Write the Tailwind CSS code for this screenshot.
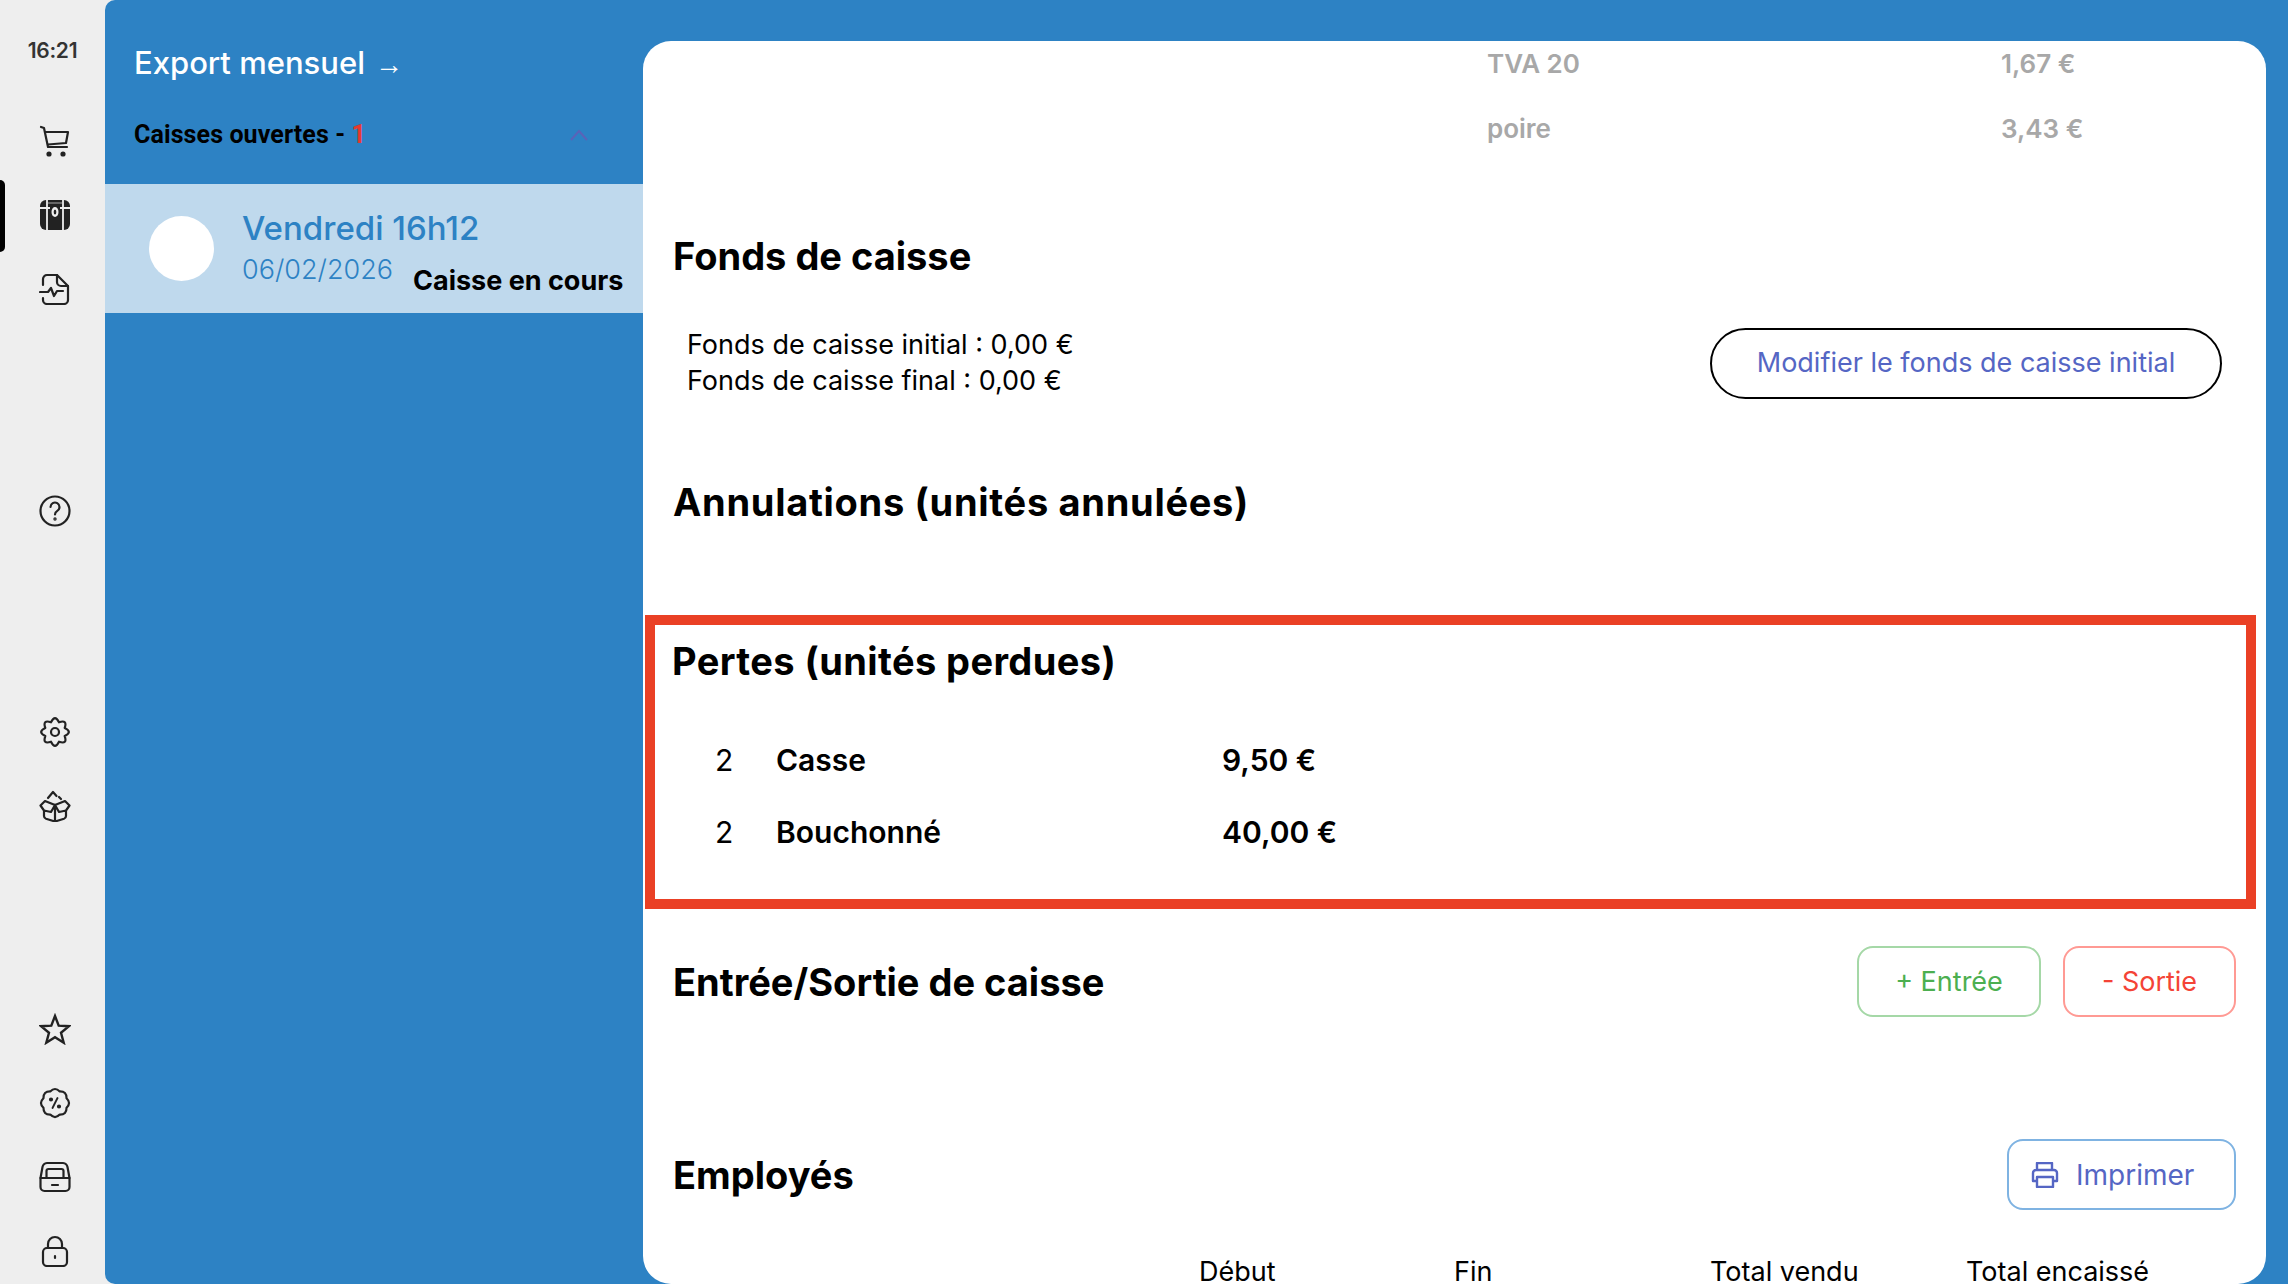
<!DOCTYPE html>
<html lang="fr">
<head>
    <meta charset="UTF-8">
    <title>Caisses</title>
    <script src="https://cdn.jsdelivr.net/npm/@tailwindcss/browser@4"></script>
</head>
<body class="font-['Inter',sans-serif] bg-[#eeeeee] text-black">
<div class="flex h-[1284px] w-[2288px] overflow-hidden">

    <!-- icon rail -->
    <aside class="w-[105px] shrink-0 bg-[#eeeeee] text-[#222222]">
        <div class="h-[100px] pt-[2px] flex items-center justify-center text-[21px] font-semibold text-[#333333] tracking-[-0.3px]">16:21</div>
        <div class="mt-[4px] h-[74px] flex items-center justify-center pl-[5px]">
            <svg width="32" height="32" viewBox="0 0 32 32" fill="none" stroke="currentColor" stroke-width="2.2" stroke-linecap="round" stroke-linejoin="round"><path d="M2 2l3 1 4 19h19"/><path d="M6 7h23l-2 11-18 1.500"/><circle cx="10" cy="29" r="1.500" fill="currentColor"/><circle cx="24" cy="29" r="1.500" fill="currentColor"/></svg>
        </div>
        <div class="relative h-[74px] flex items-center justify-center pl-[5px]">
            <div class="absolute left-0 top-[2px] w-[5px] h-[72px] bg-black rounded-r-[5px]"></div>
            <svg width="32" height="32" viewBox="0 0 32 32"><rect x="1" y="1" width="30" height="30" rx="6" fill="#222222"/><path d="M8 1v30M24 1v30M1 9h10M21 9h10" stroke="#eeeeee" stroke-width="1.800" fill="none"/><path d="M9 3h14v2H9z" fill="#666666"/><ellipse cx="16" cy="13" rx="3.500" ry="5" fill="#eeeeee"/><ellipse cx="16" cy="13" rx="1.300" ry="2.500" fill="#222222"/></svg>
        </div>
        <div class="h-[74px] flex items-center justify-center pl-[5px]">
            <svg width="32" height="32" viewBox="0 0 32 32" fill="none" stroke="currentColor" stroke-width="2.200" stroke-linecap="round" stroke-linejoin="round"><path d="M4 12V6a4 4 0 0 1 4-4h10l11 11v14a4 4 0 0 1-4 4H8a4 4 0 0 1-4-4v-2"/><path d="M18 2v7a4 4 0 0 0 4 4h7"/><path d="M1 19h8l3-4 3 8 3-5h6"/></svg>
        </div>
        <div class="mt-[148px] h-[74px] flex items-center justify-center pl-[5px]">
            <svg width="32" height="32" viewBox="0 0 32 32" fill="none" stroke="currentColor" stroke-width="2.200" stroke-linecap="round" stroke-linejoin="round"><circle cx="16" cy="16" r="14.500"/><path d="M11.500 12a4.500 4.500 0 1 1 6.800 3.900c-1.500.9-2.300 1.800-2.300 3.600"/><circle cx="16" cy="24" r=".6" fill="currentColor"/></svg>
        </div>
        <div class="mt-[147px] h-[74px] flex items-center justify-center pl-[5px]">
            <svg width="32" height="32" viewBox="0 0 32 32" fill="none" stroke="currentColor" stroke-width="2.200" stroke-linejoin="round"><path d="M25.700 11.980Q34 16 25.700 20.020Q28.700 28.700 20.020 25.700Q16 34 11.980 25.700Q3.300 28.700 6.300 20.020Q-2 16 6.300 11.980Q3.300 3.300 11.980 6.300Q16 -2 20.020 6.300Q28.700 3.300 25.700 11.980Z"/><circle cx="16" cy="16" r="4"/></svg>
        </div>
        <div class="h-[74px] flex items-center justify-center pl-[5px]">
            <svg width="32" height="32" viewBox="0 0 32 32" fill="none" stroke="currentColor" stroke-width="2.200" stroke-linecap="round" stroke-linejoin="round"><path d="M16 15L6 11 1.500 15.500 5 20.500V26a3 3 0 0 0 2 2.800l9 2.700 9-2.700a3 3 0 0 0 2-2.800v-5.500l3.500-5L26 11zM16 15v16.500M5 20.500l7 1.500 4-7 4 7 7-1.500"/><path d="M9 8l5-6 3.500 4M22 9l-2-2"/></svg>
        </div>
        <div class="mt-[149px] h-[74px] flex items-center justify-center pl-[5px]">
            <svg width="32" height="32" viewBox="0 0 32 32" fill="none" stroke="currentColor" stroke-width="2.400" stroke-linejoin="miter"><path d="M16 3l3.700 9.600 10.300.6-8 6.500 2.700 10L16 24.200l-8.700 5.500 2.700-10-8-6.500 10.300-.6z"/></svg>
        </div>
        <div class="h-[74px] flex items-center justify-center pl-[5px]">
            <svg width="32" height="32" viewBox="0 0 32 32" fill="none" stroke="currentColor" stroke-width="2.200" stroke-linecap="round" stroke-linejoin="round"><path d="M27.550 11.220Q32.500 16 27.550 20.780Q27.670 27.670 20.780 27.550Q16 32.500 11.220 27.550Q4.330 27.670 4.450 20.780Q-.5 16 4.450 11.220Q4.330 4.330 11.220 4.450Q16 -.5 20.780 4.450Q27.670 4.330 27.550 11.220Z"/><path d="M18.500 11l-5 10" stroke-width="1.800"/><circle cx="12" cy="12.500" r="1" fill="currentColor"/><circle cx="20" cy="19.500" r="1" fill="currentColor"/></svg>
        </div>
        <div class="h-[74px] flex items-center justify-center pl-[5px]">
            <svg width="32" height="32" viewBox="0 0 32 32" fill="none" stroke="currentColor" stroke-width="2.200" stroke-linecap="round" stroke-linejoin="round"><path d="M1.500 17l2-11A5 5 0 0 1 8 2h16a5 5 0 0 1 4.500 4l2 11v9a4 4 0 0 1-4 4H5.500a4 4 0 0 1-4-4z"/><path d="M1.500 17h29M7.500 17V10a2 2 0 0 1 2-2h13a2 2 0 0 1 2 2v7M13 24h6"/></svg>
        </div>
        <div class="h-[74px] flex items-center justify-center pl-[5px]">
            <svg width="32" height="32" viewBox="0 0 32 32" fill="none" stroke="currentColor" stroke-width="2.200" stroke-linecap="round" stroke-linejoin="round"><rect x="4" y="13" width="24" height="18" rx="4"/><path d="M9 13V9a7 7 0 0 1 14 0v4"/><path d="M16 21v2"/></svg>
        </div>
    </aside>

    <main class="flex-1 flex bg-[#2d82c4] rounded-l-[10px]">
        <!-- caisses column -->
        <section class="w-[538px] shrink-0">
            <div class="h-[184px] pl-[29px] pr-[54px]">
                <div class="pt-[26px] h-[100px] flex items-center gap-[10px] text-white text-[31px] font-medium leading-[42px]"><span>Export mensuel</span><span class="font-['Liberation_Sans',sans-serif] text-[28px] mt-[4px]">→</span></div>
                <div class="flex items-center justify-between mt-[14px] h-[42px]">
                    <div class="font-['Roboto',sans-serif] text-[25px] font-bold tracking-[0.1px]">Caisses ouvertes - <span class="text-[#e8382f]">1</span></div>
                    <svg width="20" height="12" viewBox="0 0 20 12" fill="none" stroke="#5a63b8" stroke-width="2"><path d="M2 11l8-9 8 9"/></svg>
                </div>
            </div>
            <div class="h-[129px] bg-[#bfd9ed] flex items-center pl-[44px] relative">
                <div class="w-[65px] h-[65px] rounded-full bg-white"></div>
                <div class="ml-[28px] text-[#2d82c4]">
                    <div class="text-[33px] font-medium leading-[40px]">Vendredi 16h12</div>
                    <div class="text-[27px] font-light leading-[40px] mt-[2px]">06/02/2026</div>
                </div>
                <div class="absolute left-[308px] top-[80px] text-[27px] font-bold leading-[34px]">Caisse en cours</div>
            </div>
        </section>

        <!-- detail panel -->
        <section class="mt-[41px] mr-[22px] flex-1 bg-white rounded-[28px] overflow-hidden">
            <div class="pl-[844px] text-[26px] font-semibold text-[#a8a8a8]">
                <div class="flex h-[44px] items-center"><span class="w-[514px]">TVA 20</span><span>1,67 €</span></div>
                <div class="flex h-[44px] mt-[21px] items-center"><span class="w-[514px]">poire</span><span>3,43 €</span></div>
            </div>

            <h2 class="px-[30px] pt-[81px] text-[38px] font-bold leading-[50px]">Fonds de caisse</h2>
            <div class="pl-[44px] pr-[44px] mt-[46px] flex items-center justify-between">
                <div class="text-[27px] leading-[36px]">
                    <div>Fonds de caisse initial : 0,00 €</div>
                    <div>Fonds de caisse final : 0,00 €</div>
                </div>
                <div class="w-[512px] h-[71px] rounded-full border-2 border-black flex items-center justify-center text-[27px] text-[#5566c4]">Modifier le fonds de caisse initial</div>
            </div>

            <h2 class="px-[30px] mt-[78px] text-[38px] font-bold leading-[50px] tracking-[0.7px]">Annulations (unités annulées)</h2>

            <div class="mt-[88px] mr-[10px] ml-[2px] h-[294px] border-[10px] border-[#ea4025] pl-[17px]">
                <h2 class="text-[38px] font-bold leading-[50px] mt-[11px] tracking-[0.4px]">Pertes (unités perdues)</h2>
                <div class="mt-[38px] flex items-center h-[72px]"><span class="w-[104px] pl-[43px] text-[30px]">2</span><span class="w-[446px] text-[30px] font-semibold">Casse</span><span class="text-[30px] font-semibold">9,50 €</span></div>
                <div class="flex items-center h-[72px]"><span class="w-[104px] pl-[43px] text-[30px]">2</span><span class="w-[446px] text-[30px] font-semibold">Bouchonné</span><span class="text-[30px] font-semibold">40,00 €</span></div>
            </div>

            <div class="pl-[30px] pr-[30px] mt-[37px] flex items-center justify-between h-[71px]">
                <h2 class="text-[38px] font-bold leading-[50px]">Entrée/Sortie de caisse</h2>
                <div class="flex gap-[22px]">
                    <div class="w-[184px] h-[71px] pt-[2px] rounded-[16px] border-2 border-[#a5d8a7] text-[#4caf50] text-[27px] flex items-center justify-center">+ Entrée</div>
                    <div class="w-[173px] h-[71px] pt-[2px] rounded-[16px] border-2 border-[#ff9a94] text-[#f44336] text-[27px] flex items-center justify-center">- Sortie</div>
                </div>
            </div>

            <div class="pl-[30px] pr-[30px] mt-[122px] flex items-center justify-between h-[71px]">
                <h2 class="text-[38px] font-bold leading-[50px]">Employés</h2>
                <div class="w-[229px] h-[71px] rounded-[16px] border-2 border-[#7fb3e2] text-[#5566c4] text-[28px] flex items-center pl-[22px] gap-[17px]">
                    <svg width="28" height="26" viewBox="0 0 28 26" fill="none" stroke="#5566c4" stroke-width="2.400" stroke-linejoin="round"><path d="M6 8V1h15v7M6 19H2V11a3 3 0 0 1 3-3h18a3 3 0 0 1 3 3v8h-4"/><rect x="6" y="15" width="16" height="10"/></svg>
                    <span>Imprimer</span>
                </div>
            </div>

            <div class="mt-[44px] pl-[556px] flex text-[27px] leading-[36px]">
                <span class="w-[255px]">Début</span><span class="w-[256px]">Fin</span><span class="w-[256px]">Total vendu</span><span>Total encaissé</span>
            </div>
        </section>
    </main>
</div>
</body>
</html>
